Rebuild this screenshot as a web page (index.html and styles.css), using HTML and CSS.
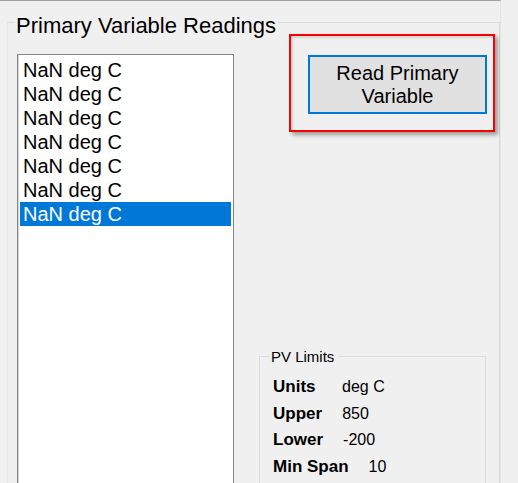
FILE: index.html
```html
<!DOCTYPE html>
<html lang="en">
<head>
<meta charset="utf-8">
<title>Primary Variable Readings</title>
<link rel="stylesheet" href="styles.css">
</head>
<body>
<div class="window">
  <fieldset class="group readings">
    <legend class="group-title">Primary Variable Readings</legend>
    <div class="readings-body">
      <ul class="listbox">
        <li class="list-item">NaN deg C</li>
        <li class="list-item">NaN deg C</li>
        <li class="list-item">NaN deg C</li>
        <li class="list-item">NaN deg C</li>
        <li class="list-item">NaN deg C</li>
        <li class="list-item">NaN deg C</li>
        <li class="list-item selected">NaN deg C</li>
      </ul>
      <div class="side">
        <div class="highlight">
          <button class="btn" type="button">Read Primary<br>Variable</button>
        </div>
        <fieldset class="group limits">
          <legend class="limits-title">PV Limits</legend>
          <div class="limit-row"><span class="limit-label">Units</span><span class="limit-value">deg C</span></div>
          <div class="limit-row"><span class="limit-label">Upper</span><span class="limit-value">850</span></div>
          <div class="limit-row"><span class="limit-label">Lower</span><span class="limit-value">-200</span></div>
          <div class="limit-row"><span class="limit-label">Min Span</span><span class="limit-value">10</span></div>
        </fieldset>
      </div>
    </div>
  </fieldset>
</div>
</body>
</html>
```
FILE: styles.css
```css
html, body {
  margin: 0;
  padding: 0;
  overflow: hidden;
  background: #f0f0f0;
}

body {
  font-family: "Liberation Sans", Arial, sans-serif;
  color: #000;
  width: 518px;
  height: 483px;
}

.window {
  width: 500px;
  height: 482px;
  border-top: 1px solid #a0a0a0;
  border-right: 1px solid #e4e4e4;
  overflow: hidden;
}

.group {
  margin: 0;
  padding: 0;
  border: 1px solid #dcdcdc;
  min-width: 0;
}

.readings {
  margin: 6px 0 0 7px;
  width: 491px;
  height: 520px;
  border-left-color: #e8e8e8;
}

.group-title {
  margin-left: 7px;
  padding: 6px 2px 0 1px;
  font-size: 22px;
  line-height: 25px;
}

.readings-body {
  display: flex;
  align-items: flex-start;
}

.listbox {
  list-style: none;
  margin: 16px 0 0 9px;
  padding: 3px 2px;
  width: 211px;
  height: 440px;
  background: #fff;
  border: 1px solid #82878f;
  box-shadow: inset 1px 0 0 #d6d6d6;
}

.list-item {
  height: 24px;
  line-height: 24px;
  padding-left: 3px;
  font-size: 20px;
  white-space: nowrap;
}

.list-item.selected {
  background: #0078d7;
  color: #fff;
}

.side {
  margin-left: 25px;
  display: flex;
  flex-direction: column;
  align-items: flex-start;
}

.highlight {
  position: relative;
  margin: 17px 0 0 49px;
}

.highlight::before {
  content: "";
  position: absolute;
  left: -19px;
  top: -21px;
  right: -8px;
  bottom: -18px;
  border: 2px solid #f00;
  box-shadow: inset 2px 2px 2px rgba(0, 0, 0, 0.12), 3px 3px 4px rgba(0, 0, 0, 0.35);
  pointer-events: none;
}

.btn {
  display: block;
  width: 179px;
  height: 59px;
  margin: 0;
  padding: 0;
  border: 2px solid #0078d7;
  background: #e1e1e1;
  font-family: "Liberation Sans", Arial, sans-serif;
  font-size: 20px;
  line-height: 23px;
  color: #000;
  text-align: center;
}

.limits {
  margin-top: 234px;
  width: 227px;
  height: 200px;
  padding: 9px 0 0 13px;
  box-sizing: border-box;
}

.limits-title {
  margin-left: -3px;
  padding: 0 4px 0 1px;
  font-size: 15px;
  line-height: 17px;
}

.limit-row {
  display: flex;
  align-items: baseline;
  height: 26.5px;
  line-height: 26.5px;
}

.limit-label {
  min-width: 69px;
  padding-right: 20px;
  box-sizing: border-box;
  font-weight: bold;
  font-size: 17px;
  white-space: nowrap;
}

.limit-value {
  font-size: 16px;
  white-space: nowrap;
}
```
